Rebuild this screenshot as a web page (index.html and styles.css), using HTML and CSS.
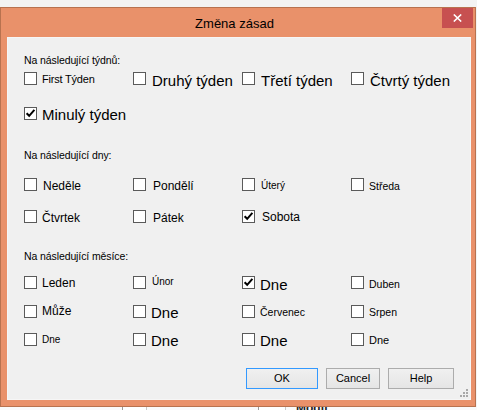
FILE: index.html
```html
<!DOCTYPE html>
<html lang="cs">
<head>
<meta charset="utf-8">
<title>Změna zásad</title>
<link rel="stylesheet" href="styles.css">
</head>
<body>
<div class="window">
  <div class="titlebar">
    <span class="spacer"></span>
    <span class="title">Změna zásad</span>
    <button class="close" aria-label="Zavřít"><svg width="9" height="8" viewBox="0 0 9 8"><path d="M0.8 0.5 L8.2 7.5 M8.2 0.5 L0.8 7.5" stroke="#fff" stroke-width="1.6" fill="none"/></svg></button>
  </div>
  <div class="client">
    <div class="group-label">Na následující týdnů:</div>
    <div class="grid weeks">
      <label class="cb"><span class="box"></span><span class="t s11 tight o2">First Týden</span></label>
      <label class="cb"><span class="box"></span><span class="t s15 o1 g6">Druhý týden</span></label>
      <label class="cb"><span class="box"></span><span class="t s15 o1 g6">Třetí týden</span></label>
      <label class="cb"><span class="box"></span><span class="t s15 o1 g6">Čtvrtý týden</span></label>
      <label class="cb"><span class="box checked"><svg width="11" height="11" viewBox="0 0 11 11"><path d="M1.6 5.2 L4.2 7.8 L9.4 1.8" stroke="#000" stroke-width="2" fill="none"/></svg></span><span class="t s15 o0">Minulý týden</span></label>
    </div>

    <div class="group-label days-label">Na následující dny:</div>
    <div class="grid days">
      <label class="cb"><span class="box"></span><span class="t s12 o2 g6">Neděle</span></label>
      <label class="cb"><span class="box"></span><span class="t s12 o2 g7">Pondělí</span></label>
      <label class="cb"><span class="box"></span><span class="t s10 o3 g6">Úterý</span></label>
      <label class="cb"><span class="box"></span><span class="t s105 o3">Středa</span></label>
      <label class="cb"><span class="box"></span><span class="t s12 o2">Čtvrtek</span></label>
      <label class="cb"><span class="box"></span><span class="t s12 o2 g7">Pátek</span></label>
      <label class="cb"><span class="box checked"><svg width="11" height="11" viewBox="0 0 11 11"><path d="M1.6 5.2 L4.2 7.8 L9.4 1.8" stroke="#000" stroke-width="2" fill="none"/></svg></span><span class="t s12 o1 g7">Sobota</span></label>
    </div>

    <div class="group-label months-label">Na následující měsíce:</div>
    <div class="grid months">
      <label class="cb"><span class="box"></span><span class="t s12 o1">Leden</span></label>
      <label class="cb"><span class="box"></span><span class="t s10 o1 g6">Únor</span></label>
      <label class="cb"><span class="box checked"><svg width="11" height="11" viewBox="0 0 11 11"><path d="M1.6 5.2 L4.2 7.8 L9.4 1.8" stroke="#000" stroke-width="2" fill="none"/></svg></span><span class="t s15 o1">Dne</span></label>
      <label class="cb"><span class="box"></span><span class="t s105 o3">Duben</span></label>
      <label class="cb"><span class="box"></span><span class="t s12 o0">Může</span></label>
      <label class="cb"><span class="box"></span><span class="t s15 o0">Dne</span></label>
      <label class="cb"><span class="box"></span><span class="t s105 o2">Červenec</span></label>
      <label class="cb"><span class="box"></span><span class="t s105 o2">Srpen</span></label>
      <label class="cb"><span class="box"></span><span class="t s10 o2">Dne</span></label>
      <label class="cb"><span class="box"></span><span class="t s15 o0">Dne</span></label>
      <label class="cb"><span class="box"></span><span class="t s15 o0">Dne</span></label>
      <label class="cb"><span class="box"></span><span class="t s11 o2">Dne</span></label>
    </div>

    <div class="buttons">
      <button class="btn ok">OK</button>
      <button class="btn cancel">Cancel</button>
      <button class="btn help">Help</button>
    </div>
    <svg class="grip" width="10" height="9" viewBox="0 0 10 9">
      <rect x="6" y="0" width="2" height="2" fill="#a8a8a8"/>
      <rect x="3" y="3" width="2" height="2" fill="#a8a8a8"/>
      <rect x="6" y="3" width="2" height="2" fill="#a8a8a8"/>
      <rect x="0" y="6" width="2" height="2" fill="#a8a8a8"/>
      <rect x="3" y="6" width="2" height="2" fill="#a8a8a8"/>
      <rect x="6" y="6" width="2" height="2" fill="#a8a8a8"/>
    </svg>
  </div>
</div>
<div class="under">
  <span class="u-box u1"></span>
  <span class="u-box u2"></span>
  <span class="u-text">Modif</span>
</div>
</body>
</html>
```

FILE: styles.css
```css
* { box-sizing: border-box; }
html, body { margin: 0; padding: 0; }
body {
  width: 477px;
  height: 410px;
  overflow: hidden;
  background: #f3f3f3;
  font-family: "Liberation Sans", Arial, sans-serif;
  color: #000;
}

.window {
  margin-top: 7px;
  width: 476px;
  border: 1px solid #b8724f;
  background: #e9916a;
  padding-bottom: 6px;
}

.titlebar {
  height: 29px;
  display: grid;
  grid-template-columns: 1fr auto 1fr;
  padding-right: 2px;
}
.title {
  margin-top: 8px;
  padding-right: 5px;
  font-size: 13px;
  line-height: 16px;
  color: #000;
  white-space: nowrap;
}
.close {
  justify-self: end;
  align-self: start;
  width: 31px;
  height: 20px;
  border: 0;
  padding: 0;
  background: #c75050;
  display: flex;
  align-items: center;
  justify-content: center;
}
.close svg { display: block; }

.client {
  position: relative;
  margin: 0 4px 0 6px;
  height: 363px;
  background: #f0f0f0;
  border: 1px solid #f6f6f6;
  padding: 16px 0 10px 16px;
}

.group-label {
  font-size: 10.5px;
  line-height: 13px;
  height: 13px;
  letter-spacing: -0.1px;
  white-space: nowrap;
}
.days-label { margin-top: 29px; }
.months-label { margin-top: 27px; }

.grid {
  display: grid;
  grid-template-columns: repeat(4, 109px);
}
.weeks { margin-top: 5px; grid-template-rows: 35px 13px; }
.days { margin-top: 16px; grid-template-rows: 32px 13px; }
.months { margin-top: 13px; grid-template-rows: 29px 28px 13px; }

.cb {
  display: flex;
  align-items: flex-start;
  align-self: start;
  height: 13px;
  white-space: nowrap;
}
.box {
  flex: none;
  width: 13px;
  height: 13px;
  border: 1px solid #5a5a5a;
  background: #fff;
  display: block;
}
.box svg { display: block; }

.t { line-height: 1; margin-left: 5px; }
.g6 { margin-left: 6px; }
.g7 { margin-left: 7px; }
.s10 { font-size: 10px; }
.s105 { font-size: 10.5px; }
.s11 { font-size: 11px; }
.s12 { font-size: 12px; }
.s15 { font-size: 15px; }
.tight { letter-spacing: -0.2px; }
.o0 { margin-top: 0; }
.o1 { margin-top: 1px; }
.o2 { margin-top: 2px; }
.o3 { margin-top: 3px; }

.buttons {
  margin-top: 22px;
  display: flex;
  justify-content: flex-end;
  gap: 8px;
  padding-right: 16px;
}
.btn {
  height: 21px;
  padding: 0;
  border: 1px solid #acacac;
  background: linear-gradient(#f0f0f0, #e5e5e5);
  font-family: "Liberation Sans", Arial, sans-serif;
  font-size: 11px;
  line-height: 19px;
  color: #000;
}
.ok { width: 72px; border-color: #3399ff; }
.cancel { width: 54px; }
.help { width: 66px; }

.grip {
  position: absolute;
  right: 0;
  bottom: 1px;
  display: block;
}

.under {
  height: 3px;
  overflow: hidden;
  background: #fafafa;
  display: flex;
  align-items: flex-start;
  padding-left: 122px;
}
.u-box {
  height: 3px;
  border-left: 1px solid #9a9a9a;
  border-right: 1px solid #c8c8c8;
  background: #fff;
}
.u1 { width: 25px; }
.u2 { width: 28px; margin-left: 111px; }
.u-text {
  margin-left: 10px;
  font-size: 12px;
  line-height: 8px;
  margin-top: -3px;
  font-weight: bold;
  color: #222;
}
```
